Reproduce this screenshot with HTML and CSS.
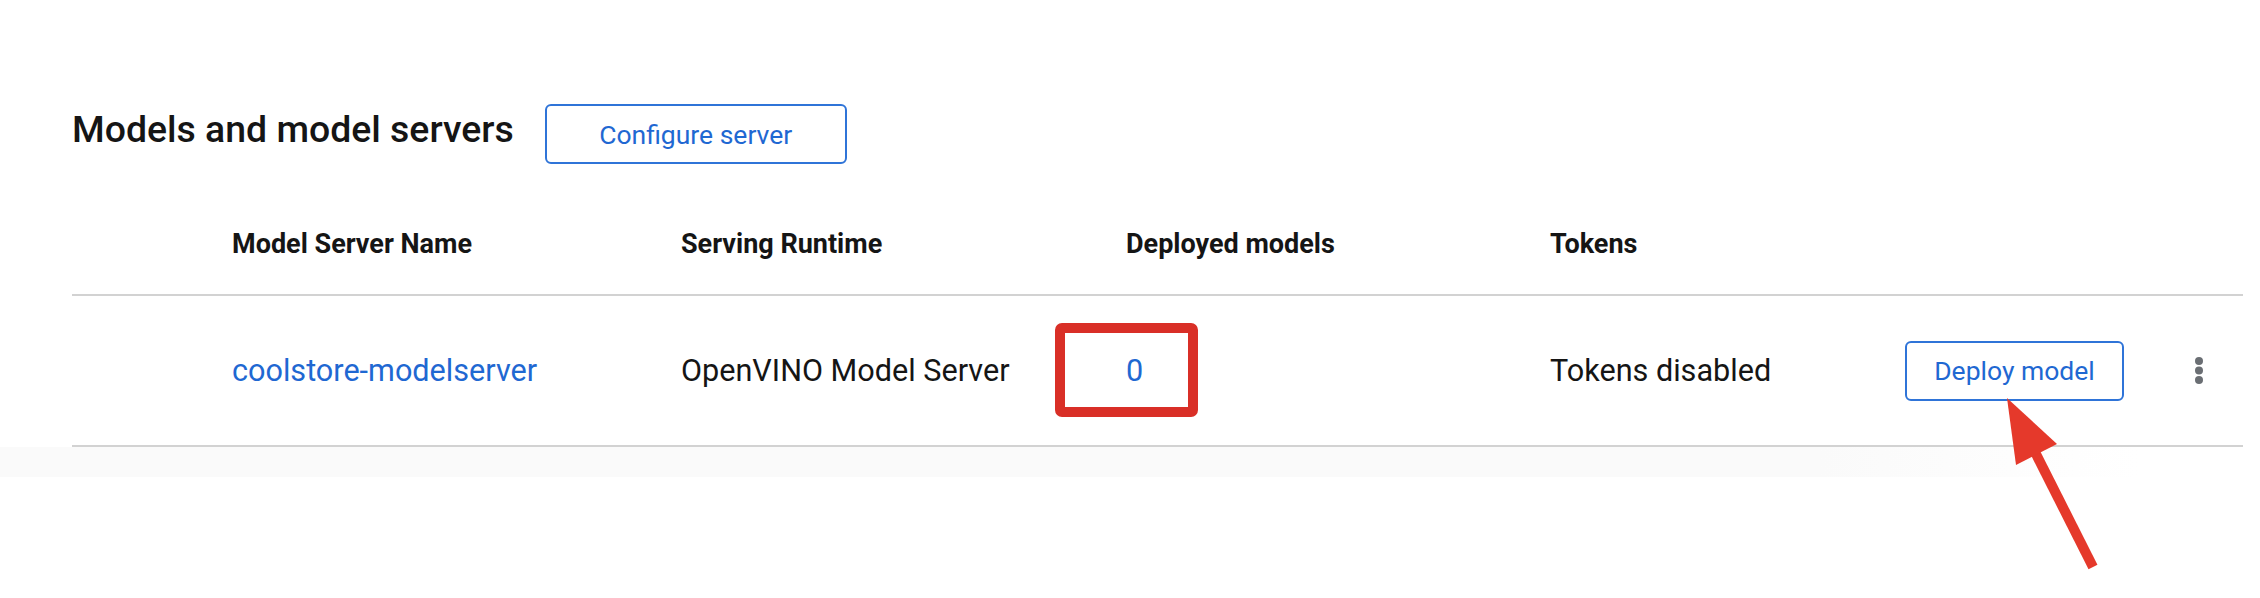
FILE: index.html
```html
<!DOCTYPE html>
<html>
<head>
<meta charset="utf-8">
<link rel="stylesheet" href="styles.css">
</head>
<body>
<div class="page">
  <div class="toolbar">
    <h2 class="title">Models and model servers</h2>
    <button class="btn btn-configure">Configure server</button>
  </div>
  <div class="table">
    <div class="row head">
      <div></div>
      <div class="cell">Model Server Name</div>
      <div class="cell">Serving Runtime</div>
      <div class="cell">Deployed models</div>
      <div class="cell">Tokens</div>
      <div></div>
      <div></div>
    </div>
    <div class="row body-row">
      <div></div>
      <div class="cell"><a class="link" href="#">coolstore-modelserver</a></div>
      <div class="cell">OpenVINO Model Server</div>
      <div class="cell"><span class="link">0</span></div>
      <div class="cell">Tokens disabled</div>
      <div class="cell"><button class="btn btn-deploy">Deploy model</button></div>
      <div class="cell kebab">
        <svg width="8" height="27" viewBox="0 0 8 27"><circle cx="4" cy="4" r="4"/><circle cx="4" cy="13.5" r="4"/><circle cx="4" cy="23" r="4"/></svg>
      </div>
    </div>
  </div>
  <div class="shade"></div>
</div>
<div class="highlight"></div>
<svg class="arrow" width="120" height="190" viewBox="1990 390 120 190">
  <line x1="2035" y1="452" x2="2093" y2="567" stroke="#e5392b" stroke-width="10"/>
  <polygon points="2007,398 2057,444 2016,465" fill="#e5392b"/>
</svg>
</body>
</html>
```

FILE: styles.css
```css
html, body {
  margin: 0;
  background: #ffffff;
}
body {
  font-family: Roboto, "Liberation Sans", sans-serif;
  color: #151515;
  width: 2260px;
  height: 598px;
  overflow: hidden;
  position: relative;
}
.page {
  padding-top: 104px;
}
.toolbar {
  display: flex;
  align-items: center;
  gap: 31px;
  margin-left: 72px;
  height: 60px;
}
.title {
  margin: 0 0 8px 0;
  font-size: 37.4px;
  font-weight: 500;
  line-height: 1;
}
.btn {
  box-sizing: border-box;
  height: 60px;
  border: 2px solid #2f74d8;
  border-radius: 6px;
  background: #ffffff;
  color: #1f68d2;
  font-family: inherit;
  font-size: 26.5px;
  padding: 0;
  display: flex;
  align-items: center;
  justify-content: center;
}
.btn-configure { width: 302px; }
.btn-deploy { width: 219px; }
.table {
  margin-left: 72px;
  width: 2171px;
  margin-top: 30px;
}
.row {
  display: grid;
  grid-template-columns: 160px 449px 445px 424px 355px 255px 1fr;
  align-items: center;
  border-bottom: 2px solid #d2d2d2;
}
.head {
  height: 100px;
  font-size: 27px;
  font-weight: 700;
}
.body-row {
  height: 149px;
  font-size: 30.6px;
}
.link {
  color: #1f68d2;
  text-decoration: none;
}
.kebab {
  padding-left: 35px;
  display: flex;
  fill: #6a6e73;
}
.shade {
  height: 30px;
  width: 2140px;
  background: linear-gradient(to right, #fafafa 85%, rgba(250,250,250,0));
}
.highlight {
  position: absolute;
  left: 1055px;
  top: 323px;
  width: 143px;
  height: 94px;
  box-sizing: border-box;
  border: 10px solid #d92f27;
  border-radius: 7px;
}
.arrow {
  position: absolute;
  left: 1990px;
  top: 390px;
}
```
